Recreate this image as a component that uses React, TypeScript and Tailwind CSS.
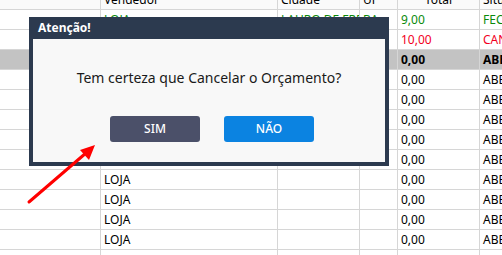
import React from "react";

type Row = {
  vendedor: string;
  cidade?: string;
  uf?: string;
  total: string;
  situacao: string;
  tone?: "green" | "red" | "selected";
};

const rows: Row[] = [
  { vendedor: "LOJA", cidade: "LAURO DE FREITAS", uf: "BA", total: "9,00", situacao: "FECHADO", tone: "green" },
  { vendedor: "LOJA", cidade: "", uf: "", total: "10,00", situacao: "CANCELADO", tone: "red" },
  { vendedor: "LOJA", total: "0,00", situacao: "ABERTO", tone: "selected" },
  { vendedor: "LOJA", total: "0,00", situacao: "ABERTO" },
  { vendedor: "LOJA", total: "0,00", situacao: "ABERTO" },
  { vendedor: "LOJA", total: "0,00", situacao: "ABERTO" },
  { vendedor: "LOJA", total: "0,00", situacao: "ABERTO" },
  { vendedor: "LOJA", total: "0,00", situacao: "ABERTO" },
  { vendedor: "LOJA", total: "0,00", situacao: "ABERTO" },
  { vendedor: "LOJA", total: "0,00", situacao: "ABERTO" },
  { vendedor: "LOJA", total: "0,00", situacao: "ABERTO" },
  { vendedor: "LOJA", total: "0,00", situacao: "ABERTO" },
  { vendedor: "LOJA", total: "0,00", situacao: "ABERTO" },
];

const cell = "h-full border-r border-[#d6d6d6] px-[3px] flex items-center overflow-hidden whitespace-nowrap";

function GridRow({ row }: { row: Row }) {
  const toneClass =
    row.tone === "green"
      ? "text-[#0b8a0b]"
      : row.tone === "red"
      ? "text-[#f2001e]"
      : row.tone === "selected"
      ? "bg-[#c3c3c3] font-bold text-black"
      : "text-black";

  return (
    <div className={`flex h-[20px] border-b border-[#d6d6d6] ${toneClass}`}>
      <div className={`${cell} w-[101px]`}></div>
      <div className={`${cell} w-[177px]`}>{row.vendedor}</div>
      <div className={`${cell} w-[82px]`}>{row.cidade}</div>
      <div className={`${cell} w-[38px]`}>{row.uf}</div>
      <div className={`${cell} w-[82px]`}>{row.total}</div>
      <div className="h-full px-[3px] flex items-center overflow-hidden whitespace-nowrap flex-1">{row.situacao}</div>
    </div>
  );
}

export default function App() {
  return (
    <div
      className="relative w-[502px] h-[255px] overflow-hidden bg-white text-[12px]"
      style={{ fontFamily: '"Noto Sans", "Open Sans", sans-serif' }}
    >
      {/* grid */}
      <div className="-mt-[10px]">
        <div className="flex h-[20px] border-b border-[#d6d6d6] bg-[#fafafa] text-black">
          <div className={`${cell} w-[101px]`}></div>
          <div className={`${cell} w-[177px]`}>Vendedor</div>
          <div className={`${cell} w-[82px]`}>Cidade</div>
          <div className={`${cell} w-[38px]`}>UF</div>
          <div className={`${cell} w-[82px] justify-center`}>Total</div>
          <div className="h-full px-[3px] flex items-center overflow-hidden whitespace-nowrap flex-1">Situação</div>
        </div>
        {rows.map((r, i) => (
          <GridRow key={i} row={r} />
        ))}
      </div>

      {/* dialog */}
      <div className="absolute left-[29px] top-[17px] w-[360px] h-[149px] bg-[#2c3a4f] flex flex-col px-[4px] pb-[4px]">
        <div className="h-[22px] flex items-center pl-[5px] text-white font-bold text-[12px]">Atenção!</div>
        <div className="flex-1 bg-[#f8f8f8] flex flex-col items-center">
          <div className="mt-[29px] text-[14px] text-[#1a1a1a] leading-[20px]">
            Tem certeza que Cancelar o Orçamento?
          </div>
          <div className="mt-[28px] flex gap-[24px] pl-[6px]">
            <button className="w-[90px] h-[26px] rounded-[3px] bg-[#4b5069] text-white text-[12px] font-medium">
              SIM
            </button>
            <button className="w-[90px] h-[26px] rounded-[3px] bg-[#0b83e1] text-white text-[12px] font-medium">
              NÃO
            </button>
          </div>
        </div>
      </div>

      {/* red arrow */}
      <svg className="absolute left-0 top-0" width="502" height="255" viewBox="0 0 502 255">
        <line x1="29" y1="202" x2="86" y2="153" stroke="#ff0000" strokeWidth="3" strokeLinecap="round" />
        <polygon points="95,145 80,150 89,160" fill="#ff0000" />
      </svg>
    </div>
  );
}
